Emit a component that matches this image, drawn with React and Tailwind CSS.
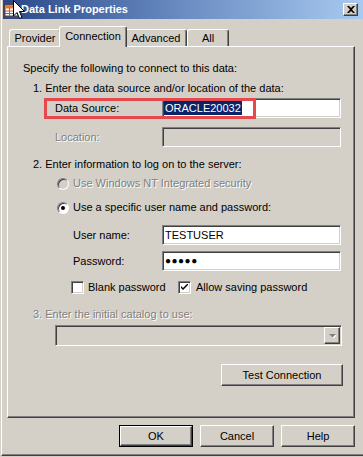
import React from "react";

const sunken =
  "border border-t-[#808080] border-l-[#808080] border-b-white border-r-white shadow-[inset_1px_1px_0_#404040,inset_-1px_-1px_0_#d4d0c8]";
const raised =
  "border border-t-white border-l-white border-r-[#404040] border-b-[#404040] shadow-[inset_-1px_-1px_0_#808080]";
const disabledText = "text-[#808080] [text-shadow:1px_1px_0_#ffffff]";

function Radio({ checked, disabled }) {
  return (
    <div
      className={`flex items-center justify-center w-[12px] h-[12px] rounded-full border border-t-[#808080] border-l-[#808080] border-b-white border-r-white shadow-[inset_1px_1px_0_#404040] ${
        disabled ? "bg-[#d4d0c8]" : "bg-white"
      }`}
    >
      {checked && <div className="w-[4px] h-[4px] rounded-full bg-black" />}
    </div>
  );
}

function Checkbox({ checked }) {
  return (
    <div className={`flex items-center justify-center w-[13px] h-[13px] bg-white ${sunken}`}>
      {checked && (
        <svg width="7" height="7" viewBox="0 0 7 7">
          <path d="M0 2 L0 4 L2 6 L7 1 L7 -1 L2 4 Z" fill="#000" />
        </svg>
      )}
    </div>
  );
}

function Tab({ label, selected, w }) {
  if (selected) {
    return (
      <div
        className={`relative z-10 ${w} -mx-[2px] h-[21px] -mb-[1px] bg-[#d4d0c8] border-t border-l border-t-white border-l-white border-r border-r-[#404040] rounded-tl-[3px] rounded-tr-[3px] shadow-[inset_-1px_0_0_#808080] flex justify-center pt-[3px]`}
      >
        {label}
      </div>
    );
  }
  return (
    <div
      className={`${w} h-[17px] bg-[#d4d0c8] border-t border-l border-t-white border-l-white border-r border-r-[#404040] rounded-tl-[3px] rounded-tr-[3px] shadow-[inset_-1px_0_0_#808080] flex justify-center pt-[2px]`}
    >
      {label}
    </div>
  );
}

function Button({ children, w = "w-[74px]", isDefault }) {
  const inner = (
    <div className={`flex items-center justify-center w-full h-full ${raised}`}>{children}</div>
  );
  if (isDefault) {
    return <div className={`${w} h-[22px] border border-black`}>{inner}</div>;
  }
  return <div className={`${w} h-[22px]`}>{inner}</div>;
}

export default function App() {
  return (
    <div className="relative w-[363px] h-[457px] overflow-hidden bg-[#d4d0c8] font-['Liberation_Sans',Arial,sans-serif] text-[11px] leading-[13px] text-black">
      <div className="ml-[1px] h-[456px] border-l border-l-white border-b border-b-[#404040] shadow-[inset_0_-1px_0_#808080]">
        {/* Title bar */}
        <div className="ml-[1px] h-[19px] flex items-center bg-gradient-to-r from-[#2a4889] via-[#6a8cc2] to-[#a8caf0]">
          <div className="ml-[1px] w-[16px] h-[16px]">
            <svg width="16" height="16" viewBox="0 0 16 16">
              <rect x="1" y="3" width="13" height="11" fill="#ffffff" stroke="#7a3b1a" strokeWidth="1" />
              <rect x="1.5" y="3.5" width="12" height="3" fill="#e2762e" />
              <line x1="1" y1="9" x2="14" y2="9" stroke="#c45a2a" />
              <line x1="1" y1="11.5" x2="14" y2="11.5" stroke="#c45a2a" />
              <line x1="5.5" y1="6" x2="5.5" y2="14" stroke="#c45a2a" />
              <line x1="9.5" y1="6" x2="9.5" y2="14" stroke="#c45a2a" />
            </svg>
          </div>
          <div className="ml-[1px] font-bold text-white text-[11px]">Data Link Properties</div>
          <div className="flex-1" />
          <div className={`mr-[5px] w-[15px] h-[13px] bg-[#d4d0c8] flex items-center justify-center ${raised}`}>
            <svg width="8" height="7" viewBox="0 0 8 7">
              <path d="M0 0 H2 L4 2 L6 0 H8 L5 3.5 L8 7 H6 L4 5 L2 7 H0 L3 3.5 Z" fill="#000" />
            </svg>
          </div>
        </div>

        {/* Tabs */}
        <div className="ml-[5px] mt-[8px] flex items-end h-[19px] pl-[2px]">
          <Tab label="Provider" w="w-[52px]" />
          <Tab label="Connection" w="w-[68px]" selected />
          <Tab label="Advanced" w="w-[62px]" />
          <Tab label="All" w="w-[42px]" />
        </div>

        {/* Panel */}
        <div className="ml-[5px] w-[348px] h-[372px] border border-t-white border-l-white border-r-[#404040] border-b-[#404040] shadow-[inset_-1px_-1px_0_#808080] flex flex-col">
          <div className="mt-[15px] pl-[15px]">Specify the following to connect to this data:</div>
          <div className="mt-[7px] pl-[25px]">1. Enter the data source and/or location of the data:</div>

          <div className="mt-[3px] flex items-center h-[20px]">
            <div className="w-[154px] pl-[47px]">Data Source:</div>
            <div className={`w-[179px] h-[20px] bg-white flex items-center pl-[1px] ${sunken}`}>
              <span className="bg-[#0a246a] text-white px-[1px] leading-[14px]">ORACLE20032</span>
            </div>
          </div>

          <div className="mt-[9px] flex items-center h-[20px]">
            <div className={`w-[154px] pl-[47px] ${disabledText}`}>Location:</div>
            <div className={`w-[179px] h-[20px] bg-[#d4d0c8] ${sunken}`} />
          </div>

          <div className="mt-[11px] pl-[25px]">2. Enter information to log on to the server:</div>

          <div className="mt-[6px] flex items-center h-[13px] pl-[49px]">
            <Radio disabled />
            <div className={`ml-[4px] ${disabledText}`}>Use Windows NT Integrated security</div>
          </div>
          <div className="mt-[11px] flex items-center h-[13px] pl-[49px]">
            <Radio checked />
            <div className="ml-[4px]">Use a specific user name and password:</div>
          </div>

          <div className="mt-[11px] flex items-center h-[20px]">
            <div className="w-[154px] pl-[65px]">User name:</div>
            <div className={`w-[179px] h-[20px] bg-white flex items-center pl-[2px] ${sunken}`}>TESTUSER</div>
          </div>
          <div className="mt-[6px] flex items-center h-[20px]">
            <div className="w-[154px] pl-[65px]">Password:</div>
            <div className={`w-[179px] h-[20px] bg-white flex items-center pl-[2px] ${sunken}`}>
              <span className="text-[10px] tracking-[0.5px] leading-[10px]">●●●●●</span>
            </div>
          </div>

          <div className="mt-[10px] flex items-center h-[13px] pl-[63px]">
            <div className="w-[107px] flex items-center">
              <Checkbox />
              <div className="ml-[4px]">Blank password</div>
            </div>
            <Checkbox checked />
            <div className="ml-[5px]">Allow saving password</div>
          </div>

          <div className={`mt-[14px] pl-[25px] ${disabledText}`}>3. Enter the initial catalog to use:</div>

          <div className={`mt-[4px] ml-[47px] w-[287px] h-[21px] bg-[#d4d0c8] flex items-center justify-end pr-[1px] ${sunken}`}>
            <div className={`w-[16px] h-[17px] bg-[#d4d0c8] flex items-center justify-center ${raised}`}>
              <svg width="7" height="5" viewBox="0 0 7 5">
                <path d="M1 2 H8 L4.5 5.5 Z" fill="#ffffff" />
                <path d="M0 1 H7 L3.5 4.5 Z" fill="#808080" />
              </svg>
            </div>
          </div>

          <div className="mt-[18px] flex justify-end pr-[11px]">
            <Button w="w-[122px]">Test Connection</Button>
          </div>
        </div>

        {/* Bottom buttons */}
        <div className="mt-[7px] ml-[117px] flex gap-[7px]">
          <Button isDefault>OK</Button>
          <Button>Cancel</Button>
          <Button>Help</Button>
        </div>
      </div>

      {/* Red annotation box */}
      <div className="absolute left-[44px] top-[98px] w-[212px] h-[21px] border-[3px] border-[#e5484d]" />

      {/* Mouse cursor */}
      <svg className="absolute left-[12px] top-[-1px]" width="14" height="21" viewBox="0 0 14 21">
        <path d="M1.5 1.5 L1.5 17 L5 13.5 L7.5 19.5 L10 18.5 L7.5 12.5 L12.5 12.5 Z" fill="#ffffff" stroke="#000000" strokeWidth="1" />
      </svg>
    </div>
  );
}
